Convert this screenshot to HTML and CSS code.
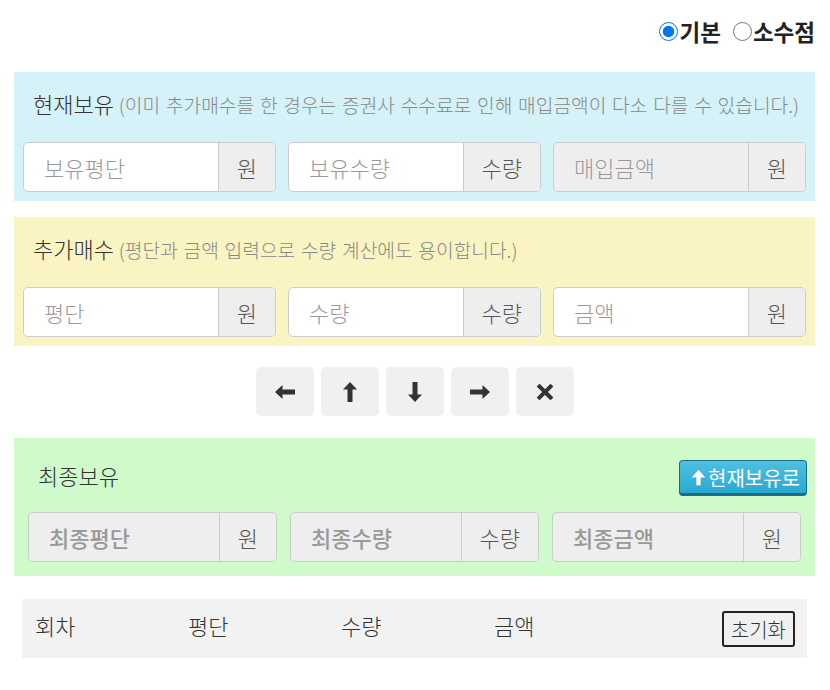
FILE: index.html
```html
<!DOCTYPE html>
<html>
<head>
    <meta charset="utf-8">
    <link rel="stylesheet" href="styles.css">
</head>
<body>
    <div class="wrap">
        <!-- 모드 선택 -->
        <div class="mode-row">
            <label class="mode"><input type="radio" name="mode" checked>기본</label>
            <label class="mode"><input type="radio" name="mode">소수점</label>
        </div>

        <!-- 현재보유 -->
        <div class="box box-now">
            <div class="box-title">현재보유 <span class="note">(이미 추가매수를 한 경우는 증권사 수수료로 인해 매입금액이 다소 다를 수 있습니다.)</span></div>
            <div class="input-row">
                <div class="input-group">
                    <input type="text" placeholder="보유평단">
                    <span class="addon">원</span>
                </div>
                <div class="input-group">
                    <input type="text" placeholder="보유수량">
                    <span class="addon">수량</span>
                </div>
                <div class="input-group disabled">
                    <input type="text" placeholder="매입금액" disabled>
                    <span class="addon">원</span>
                </div>
            </div>
        </div>

        <!-- 추가매수 -->
        <div class="box box-add">
            <div class="box-title">추가매수 <span class="note">(평단과 금액 입력으로 수량 계산에도 용이합니다.)</span></div>
            <div class="input-row">
                <div class="input-group">
                    <input type="text" placeholder="평단">
                    <span class="addon">원</span>
                </div>
                <div class="input-group">
                    <input type="text" placeholder="수량">
                    <span class="addon">수량</span>
                </div>
                <div class="input-group">
                    <input type="text" placeholder="금액">
                    <span class="addon">원</span>
                </div>
            </div>
        </div>

        <!-- 이동 버튼 -->
        <div class="tool-row">
            <button class="tool-btn"><svg viewBox="0 0 22 22" width="22" height="22"><path d="M1 11 L8.5 4 L8.5 8.5 L21 8.5 L21 13.5 L8.5 13.5 L8.5 18 Z"/></svg></button>
            <button class="tool-btn"><svg viewBox="0 0 22 22" width="22" height="22"><path d="M11 1 L18 8.5 L13.5 8.5 L13.5 21 L8.5 21 L8.5 8.5 L4 8.5 Z"/></svg></button>
            <button class="tool-btn"><svg viewBox="0 0 22 22" width="22" height="22"><path d="M11 21 L18 13.5 L13.5 13.5 L13.5 1 L8.5 1 L8.5 13.5 L4 13.5 Z"/></svg></button>
            <button class="tool-btn"><svg viewBox="0 0 22 22" width="22" height="22"><path d="M21 11 L13.5 4 L13.5 8.5 L1 8.5 L1 13.5 L13.5 13.5 L13.5 18 Z"/></svg></button>
            <button class="tool-btn"><svg viewBox="0 0 22 22" width="22" height="22"><path d="M5.5 5.5 L16.5 16.5 M16.5 5.5 L5.5 16.5" stroke="#333" stroke-width="4" stroke-linecap="square"/></svg></button>
        </div>

        <!-- 최종보유 -->
        <div class="box box-final">
            <div class="final-head">
                <span class="final-title">최종보유</span>
                <button class="to-now"><svg viewBox="0 0 20 20" width="17" height="19"><path d="M10 1 L18 10 L12.5 10 L12.5 19 L7.5 19 L7.5 10 L2 10 Z" fill="#fff"/></svg>현재보유로</button>
            </div>
            <div class="input-row final-row">
                <div class="input-group disabled">
                    <input type="text" placeholder="최종평단" disabled>
                    <span class="addon">원</span>
                </div>
                <div class="input-group disabled">
                    <input type="text" placeholder="최종수량" disabled>
                    <span class="addon">수량</span>
                </div>
                <div class="input-group disabled">
                    <input type="text" placeholder="최종금액" disabled>
                    <span class="addon">원</span>
                </div>
            </div>
        </div>

        <!-- 기록 -->
        <div class="history">
            <div class="col">회차</div>
            <div class="col">평단</div>
            <div class="col">수량</div>
            <div class="col">금액</div>
            <button class="reset">초기화</button>
        </div>
    </div>
</body>
</html>
```

FILE: styles.css
```css
body {
    margin: 0;
    background: white;
    font-family: "Noto Sans CJK KR", "Noto Sans", sans-serif;
    font-weight: 300;
    color: #333;
}

.wrap {
    width: 801px;
    margin: 0 14px;
}

.mode-row {
    height: 72px;
    display: flex;
    justify-content: flex-end;
    align-items: center;
    gap: 12px;
}

.mode {
    display: flex;
    align-items: center;
    font-size: 22.5px;
    font-weight: bold;
    color: #222;
    margin-top: -10px;
}

.mode input {
    width: 19px;
    height: 19px;
    margin: 0 1px 0 0;
}

.box {
    padding: 9px;
}

.box-now {
    background: #d4f2f8;
}

.box-add {
    background: #f9f4c1;
    margin-top: 16px;
}

.box-final {
    background: #cffaca;
    padding: 14px;
}

.box-title {
    height: 44px;
    line-height: 44px;
    padding-left: 10px;
    margin-bottom: 17px;
    font-size: 22px;
    color: #333;
    white-space: nowrap;
}

.note {
    font-size: 19.2px;
    word-spacing: 1.5px;
    color: #888;
}

.input-row {
    display: flex;
    gap: 12px;
}

.final-row {
    gap: 13px;
}

.input-group {
    flex: 1;
    display: flex;
    height: 50px;
    box-sizing: border-box;
    border: 1px solid #ccc;
    border-radius: 5px;
    background: white;
    overflow: hidden;
}

.input-group input {
    flex: 1;
    min-width: 0;
    border: none;
    outline: none;
    background: transparent;
    padding: 0 0 0 20px;
    font-family: inherit;
    font-weight: 300;
    font-size: 22px;
    color: #333;
}

.input-group input::placeholder {
    color: #999;
}

.input-group.disabled {
    background: #eee;
}

.final-row input::placeholder {
    font-weight: 500;
    color: #999;
}

.addon {
    display: flex;
    align-items: center;
    justify-content: center;
    padding: 0 18px;
    background: #eee;
    border-left: 1px solid #ccc;
    font-size: 22px;
    color: #555;
}

.tool-row {
    display: flex;
    justify-content: center;
    gap: 7px;
    margin: 21px 0 22px;
}

.tool-btn {
    width: 58px;
    height: 49px;
    border: none;
    border-radius: 5px;
    background: #f0f0f0;
    display: flex;
    align-items: center;
    justify-content: center;
    padding: 0;
}

.tool-btn svg {
    fill: #333;
}

.final-head {
    display: flex;
    justify-content: space-between;
    align-items: center;
    height: 46px;
    margin-bottom: 14px;
}

.final-title {
    padding-left: 10px;
    font-size: 22px;
    color: #333;
}

.to-now {
    display: flex;
    align-items: center;
    height: 36px;
    margin: 6px -6px 0 0;
    padding: 0 6px 0 10px;
    border: 1px solid #1b6d85;
    border-bottom: 3px solid #1b6d85;
    border-radius: 4px;
    background: linear-gradient(#4fc0e0, #2aa9d2);
    color: white;
    font-family: inherit;
    font-weight: 400;
    font-size: 20px;
}

.to-now svg {
    margin-right: 1px;
}

.history {
    display: flex;
    align-items: flex-start;
    margin: 23px 8px 0;
    padding: 12px 12px 11px 13px;
    background: #f2f2f2;
}

.col {
    width: 153px;
    line-height: 28px;
    font-size: 22px;
    color: #333;
}

.reset {
    margin-left: auto;
    height: 36px;
    padding: 0 7px;
    background: #f0f0f0;
    border: 2px solid #222;
    border-radius: 3px;
    font-family: inherit;
    font-weight: 300;
    font-size: 20px;
    color: #333;
}
```
